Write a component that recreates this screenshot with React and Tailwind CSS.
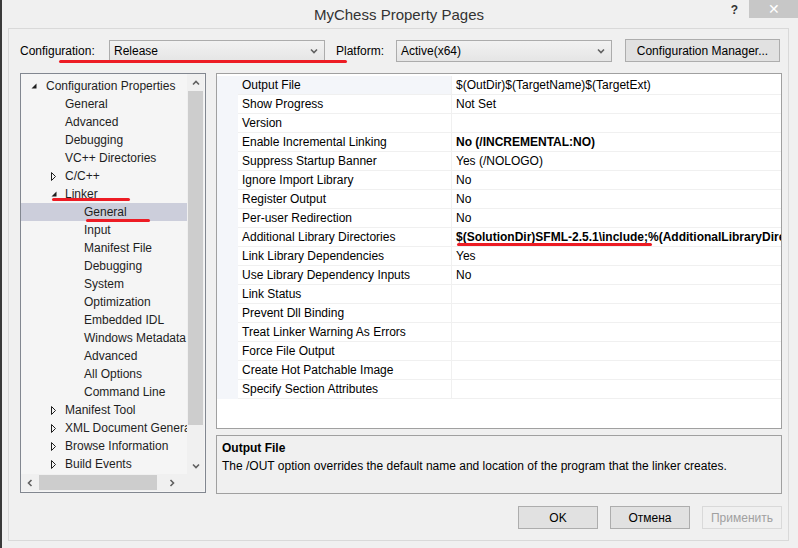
import React from 'react';

const tree = [
  { label: 'Configuration Properties', level: 0, exp: 'open' },
  { label: 'General', level: 1 },
  { label: 'Advanced', level: 1 },
  { label: 'Debugging', level: 1 },
  { label: 'VC++ Directories', level: 1 },
  { label: 'C/C++', level: 1, exp: 'closed' },
  { label: 'Linker', level: 1, exp: 'open' },
  { label: 'General', level: 2, selected: true },
  { label: 'Input', level: 2 },
  { label: 'Manifest File', level: 2 },
  { label: 'Debugging', level: 2 },
  { label: 'System', level: 2 },
  { label: 'Optimization', level: 2 },
  { label: 'Embedded IDL', level: 2 },
  { label: 'Windows Metadata', level: 2 },
  { label: 'Advanced', level: 2 },
  { label: 'All Options', level: 2 },
  { label: 'Command Line', level: 2 },
  { label: 'Manifest Tool', level: 1, exp: 'closed' },
  { label: 'XML Document Genera', level: 1, exp: 'closed' },
  { label: 'Browse Information', level: 1, exp: 'closed' },
  { label: 'Build Events', level: 1, exp: 'closed' },
];

const props = [
  ['Output File', '$(OutDir)$(TargetName)$(TargetExt)'],
  ['Show Progress', 'Not Set'],
  ['Version', ''],
  ['Enable Incremental Linking', 'No (/INCREMENTAL:NO)', true],
  ['Suppress Startup Banner', 'Yes (/NOLOGO)'],
  ['Ignore Import Library', 'No'],
  ['Register Output', 'No'],
  ['Per-user Redirection', 'No'],
  ['Additional Library Directories', '$(SolutionDir)SFML-2.5.1\\include;%(AdditionalLibraryDirec', true],
  ['Link Library Dependencies', 'Yes'],
  ['Use Library Dependency Inputs', 'No'],
  ['Link Status', ''],
  ['Prevent Dll Binding', ''],
  ['Treat Linker Warning As Errors', ''],
  ['Force File Output', ''],
  ['Create Hot Patchable Image', ''],
  ['Specify Section Attributes', ''],
];

const indent = ['pl-[25px]', 'pl-[44px]', 'pl-[63px]'];

const Chevron = ({ dir = 'down', className = '' }) => {
  const d = {
    down: 'M1 1.5 L4 4.5 L7 1.5',
    up: 'M1 4.5 L4 1.5 L7 4.5',
    left: 'M4.5 1 L1.5 4 L4.5 7',
    right: 'M1.5 1 L4.5 4 L1.5 7',
  }[dir];
  const box = dir === 'down' || dir === 'up' ? '0 0 8 6' : '0 0 6 8';
  return (
    <svg viewBox={box} className={className}>
      <path d={d} fill="none" stroke="#606060" strokeWidth="1.6" />
    </svg>
  );
};

const Expander = ({ type }) => (
  type === 'open' ? (
    <svg viewBox="0 0 6 6" className="w-[6px] h-[6px]">
      <polygon points="5.5,0.5 5.5,5.5 0.5,5.5" fill="#1e1e1e" />
    </svg>
  ) : (
    <svg viewBox="0 0 6 9" className="w-[6px] h-[9px]">
      <polygon points="0.5,0.5 4.5,4.5 0.5,8.5" fill="none" stroke="#1e1e1e" strokeWidth="1" />
    </svg>
  )
);

const Dropdown = ({ value }) => (
  <div className="w-[216px] h-[22px] flex items-center justify-between pl-[4px] pr-[6px] border border-[#acacac] bg-gradient-to-b from-[#f2f2f2] to-[#e5e5e5] text-black">
    <span>{value}</span>
    <Chevron className="w-[8px] h-[6px]" />
  </div>
);

const Button = ({ children, disabled, className = '' }) => (
  <div className={`h-[23px] flex items-center justify-center border ${disabled ? 'border-[#d9d9d9] text-[#a0a0a0] bg-[#f0f0f0]' : 'border-[#adadad] bg-[#e1e1e1] text-black'} ${className}`}>
    {children}
  </div>
);

const Mark = ({ className }) => (
  <div className={`absolute h-[3px] rounded-full bg-[#ed1c24] ${className}`} />
);

export default function App() {
  return (
    <div
      className="relative w-[798px] h-[548px] overflow-hidden bg-[#f0f0f0] border-l-2 border-[#3a3a3a] text-[12px] leading-none"
      style={{ fontFamily: '"Liberation Sans", Arial, sans-serif' }}
    >
      {/* title bar */}
      <div className="h-[28px] grid grid-cols-[1fr_auto_1fr]">
        <div />
        <div className="self-center text-[15px] text-[#333333] pt-[1px] -ml-[2px]">MyChess Property Pages</div>
        <div className="flex justify-end items-start">
          <span className="mt-[4px] mr-[11px] font-bold text-[12px] text-[#333]">?</span>
          <div className="w-[49px] h-[18px] bg-[#c7c7c7] flex items-center justify-center text-white text-[14px]">✕</div>
        </div>
      </div>

      {/* dialog frame */}
      <div className="ml-[6px] w-[781px] h-[513px] border border-[#d9d9d9] pl-[11px] pt-[10px] flex flex-col">
        {/* configuration row */}
        <div className="h-[23px] flex items-center">
          <span className="w-[89px] text-black">Configuration:</span>
          <Dropdown value="Release" />
          <span className="ml-[11px] w-[60px] text-black">Platform:</span>
          <Dropdown value="Active(x64)" />
          <Button className="ml-[13px] w-[155px]">Configuration Manager...</Button>
        </div>

        <div className="mt-[11px] flex gap-[10px]">
          {/* tree */}
          <div className="w-[186px] h-[420px] border border-[#828790] bg-[#f5f5f5] grid grid-cols-[166px_17px] grid-rows-[400px_17px]">
            <div className="overflow-hidden pt-[3px]">
              {tree.map((n, i) => (
                <div
                  key={i}
                  className={`relative h-[18px] flex items-center whitespace-nowrap text-[#1e1e1e] ${indent[n.level]} ${n.selected ? 'bg-[#cccedb]' : ''}`}
                >
                  {n.exp && (
                    <span className={`absolute flex items-center ${n.level === 0 ? 'left-[10px]' : 'left-[30px]'}`}>
                      <Expander type={n.exp} />
                    </span>
                  )}
                  {n.label}
                </div>
              ))}
            </div>
            <div className="bg-[#f0f0f0] flex flex-col items-center">
              <div className="h-[17px] flex items-center"><Chevron dir="up" className="w-[8px] h-[6px]" /></div>
              <div className="w-[15px] h-[334px] bg-[#cdcdcd]" />
              <div className="flex-1 flex items-end pb-[5px]"><Chevron dir="down" className="w-[8px] h-[6px]" /></div>
            </div>
            <div className="bg-[#f0f0f0] flex items-center">
              <div className="w-[18px] flex justify-center"><Chevron dir="left" className="w-[6px] h-[8px]" /></div>
              <div className="w-[118px] h-[15px] bg-[#cdcdcd]" />
              <div className="flex-1 flex justify-center"><Chevron dir="right" className="w-[6px] h-[8px]" /></div>
            </div>
            <div className="bg-[#f0f0f0]" />
          </div>

          {/* property grid + description */}
          <div className="w-[566px] flex flex-col gap-[6px]">
            <div className="h-[356px] border border-[#a0a0a0] bg-white pt-[2px] overflow-hidden">
              {props.map(([name, value, bold], i) => (
                <div key={i} className="h-[19px] flex text-black whitespace-nowrap">
                  <div className="w-[21px] bg-[#f4f6fa]" />
                  <div className={`w-[214px] pl-[4px] flex items-center border-b border-r border-[#f0f0f0] ${i === 0 ? 'bg-[#f4f6fa]' : ''}`}>{name}</div>
                  <div className={`flex-1 pl-[4px] flex items-center border-b border-[#f0f0f0] overflow-hidden ${bold ? 'font-bold' : ''}`}>{value}</div>
                </div>
              ))}
            </div>
            <div className="h-[59px] border border-[#a0a0a0] bg-[#f0f0f0] px-[5px] pt-[6px] text-black">
              <div className="font-bold h-[13px]">Output File</div>
              <div className="mt-[5px]">The /OUT option overrides the default name and location of the program that the linker creates.</div>
            </div>
          </div>
        </div>

        {/* buttons */}
        <div className="mt-[12px] w-[762px] flex justify-end gap-[12px]">
          <Button className="w-[80px]">OK</Button>
          <Button className="w-[80px]">Отмена</Button>
          <Button className="w-[80px]" disabled>Применить</Button>
        </div>
      </div>

      {/* red annotations */}
      <Mark className="left-[57px] top-[60px] w-[288px]" />
      <Mark className="left-[50px] top-[198px] w-[78px]" />
      <Mark className="left-[84px] top-[219px] w-[64px]" />
      <Mark className="left-[455px] top-[243px] w-[195px]" />
    </div>
  );
}
